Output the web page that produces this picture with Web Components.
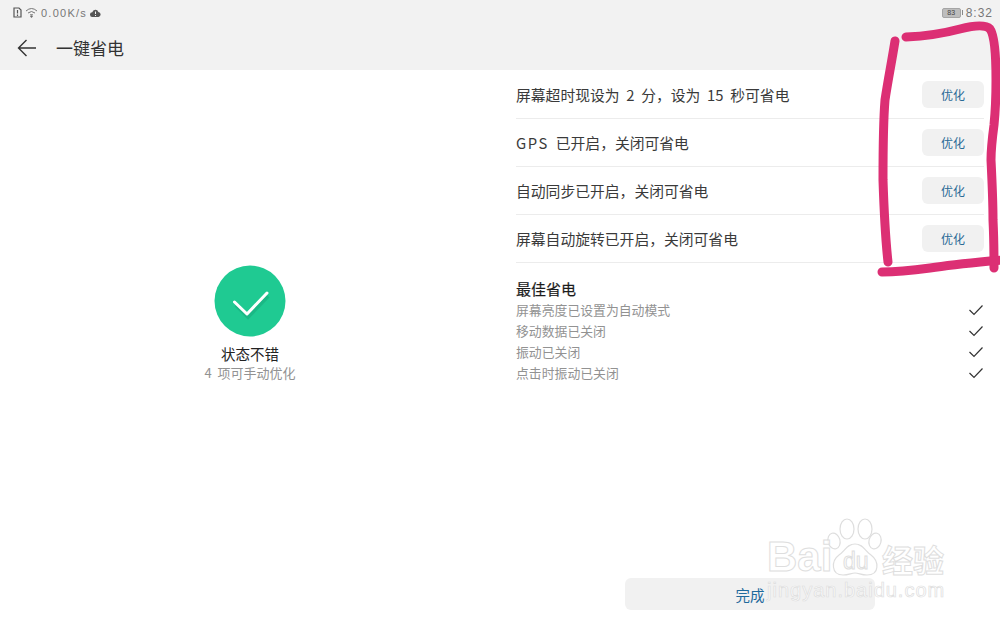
<!DOCTYPE html>
<html lang="zh">
<head>
<meta charset="utf-8">
<title>一键省电</title>
<style>
  html, body { margin: 0; height: 100%; background: #fff; }
  body { font-family: "Noto Sans CJK SC", "Liberation Sans", sans-serif; overflow: hidden; }
</style>
</head>
<body>
<saver-page>
  <saver-row action="优化">屏幕超时现设为 2 分&#xFF0C;设为 15 秒可省电</saver-row>
  <saver-row action="优化"><span style="letter-spacing:1.6px">GPS</span> 已开启&#xFF0C;关闭可省电</saver-row>
  <saver-row action="优化">自动同步已开启&#xFF0C;关闭可省电</saver-row>
  <saver-row action="优化">屏幕自动旋转已开启&#xFF0C;关闭可省电</saver-row>
  <saver-done>屏幕亮度已设置为自动模式</saver-done>
  <saver-done>移动数据已关闭</saver-done>
  <saver-done>振动已关闭</saver-done>
  <saver-done>点击时振动已关闭</saver-done>
</saver-page>

<script>
class SaverRow extends HTMLElement {
  constructor() {
    super();
    const shadow = this.attachShadow({ mode: 'open' });
    shadow.innerHTML = `
      <style>
        :host {
          display: flex;
          align-items: center;
          justify-content: space-between;
          height: 47px;
          border-bottom: 1px solid #ececec;
          font-size: 14.8px;
          color: #3a3a3a;
          white-space: pre;
          word-spacing: 3.4px;
        }
        button {
          width: 62px;
          height: 27px;
          border: 0;
          padding: 0;
          border-radius: 6px;
          background: #f1f1f1;
          color: #2a6a96;
          font: inherit;
          font-size: 12px;
        }
      </style>
      <span><slot></slot></span>
      <button>${this.getAttribute('action')}</button>
    `;
  }
}
customElements.define('saver-row', SaverRow);

class SaverDone extends HTMLElement {
  constructor() {
    super();
    const shadow = this.attachShadow({ mode: 'open' });
    shadow.innerHTML = `
      <style>
        :host {
          display: flex;
          align-items: center;
          justify-content: space-between;
          height: 21px;
          font-size: 12.85px;
          color: #929292;
        }
        svg { width: 16px; height: 12px; }
      </style>
      <span><slot></slot></span>
      <svg viewBox="0 0 16 12" fill="none" stroke="#333" stroke-width="1.2"><path d="M1.5 6 L6 10.5 L14.5 1.5"/></svg>
    `;
  }
}
customElements.define('saver-done', SaverDone);

class SaverStatusBar extends HTMLElement {
  constructor() {
    super();
    const shadow = this.attachShadow({ mode: 'open' });
    shadow.innerHTML = `
      <style>
        :host {
          display: flex;
          align-items: center;
          height: 25px;
          padding: 0 8px 0 13px;
          font-family: "Liberation Sans", sans-serif;
          font-size: 11px;
          color: #777;
          letter-spacing: 1.25px;
        }
        .left { display: flex; align-items: center; gap: 3px; flex: 1; }
        .right { display: flex; align-items: center; gap: 3px; }
        .time { font-size: 12px; letter-spacing: 1px; margin-right: -1px; }
        .batt {
          width: 17px; height: 8px; background: #bdbdbd; border: 1px solid #a5a5a5; border-radius: 2px;
          font-size: 7px; line-height: 8px; text-align: center; color: #444; letter-spacing: 0;
        }
        .nub { width: 1px; height: 5px; background: #888; margin-left: -2px; }
      </style>
      <div class="left">
        <svg width="9" height="11" viewBox="0 0 9 11" fill="none" stroke="#555" stroke-width="1.2"><path d="M1 1 H6 L8 3 V10 H1 Z"/><path d="M4.5 3 V6.5 M4.5 7.5 V9"/></svg>
        <svg width="13" height="11" viewBox="0 0 13 11" fill="none" stroke="#777" stroke-width="1"><path d="M1 4 Q6.5 -1 12 4 M3 6 Q6.5 3 10 6 M5 8 Q6.5 7 8 8"/><circle cx="6.5" cy="9.5" r=".8" fill="#666"/></svg>
        <span>0.00K/s</span>
        <svg width="11" height="8" viewBox="0 0 11 8"><path fill="#555" d="M2.5 8 A2.4 2.4 0 0 1 2.3 3.2 A3.2 3.2 0 0 1 8.4 2.9 A2.6 2.6 0 0 1 8.6 8 Z"/><path stroke="#f2f2f2" d="M5.5 2.5 V5 M5.5 6 V7"/></svg>
      </div>
      <div class="right">
        <span class="batt">83</span><span class="nub"></span>
        <span class="time">8:32</span>
      </div>
    `;
  }
}
customElements.define('saver-status-bar', SaverStatusBar);

class SaverHeader extends HTMLElement {
  constructor() {
    super();
    const shadow = this.attachShadow({ mode: 'open' });
    shadow.innerHTML = `
      <style>
        :host { display: block; height: 70px; background: #f2f2f2; }
        .bar { display: flex; align-items: center; height: 45px; padding-left: 17px; gap: 19px; }
        h1 { margin: 0; font-size: 17px; font-weight: 400; color: #333; }
        svg { display: block; }
      </style>
      <saver-status-bar></saver-status-bar>
      <div class="bar">
        <svg width="20" height="18" viewBox="0 0 20 18" fill="none" stroke="#333" stroke-width="1.4"><path d="M19 9 H2 M9.5 1 L1.5 9 L9.5 17"/></svg>
        <h1>一键省电</h1>
      </div>
    `;
  }
}
customElements.define('saver-header', SaverHeader);

class SaverStatus extends HTMLElement {
  constructor() {
    super();
    const shadow = this.attachShadow({ mode: 'open' });
    shadow.innerHTML = `
      <style>
        :host { display: flex; flex-direction: column; align-items: center; padding-top: 195px; }
        svg { display: block; margin-bottom: 7px; }
        .title { font-size: 14.5px; line-height: 20px; color: #222; }
        .sub { font-size: 13px; line-height: 18px; color: #929292; white-space: pre; }
      </style>
      <svg width="72" height="72" viewBox="0 0 72 72">
        <circle cx="36" cy="36" r="35.5" fill="#1fca92"/>
        <path d="M21 38 L33 50 L53 29" fill="none" stroke="#0f8f66" stroke-opacity=".3" stroke-width="4" transform="translate(1 2)"/>
        <path d="M20.5 37 L33 49 L53 28" fill="none" stroke="#fff" stroke-width="3" stroke-linecap="round" stroke-linejoin="round"/>
      </svg>
      <div class="title">状态不错</div>
      <div class="sub">4  项可手动优化</div>
    `;
  }
}
customElements.define('saver-status', SaverStatus);

class SaverPage extends HTMLElement {
  constructor() {
    super();
    const shadow = this.attachShadow({ mode: 'open' });
    shadow.innerHTML = `
      <style>
        :host { display: block; position: relative; width: 1000px; height: 625px; overflow: hidden; }
        .main { display: grid; grid-template-columns: 500px 1fr; }
        .list { padding: 1px 16px 0; }
        h2 { margin: 16px 0 0; font-size: 15px; line-height: 20px; font-weight: 400; color: #1c1c1c; -webkit-text-stroke: .2px #1c1c1c; }
        .finish {
          position: absolute; left: 625px; top: 578px; width: 250px; height: 32px;
          display: flex; align-items: center; justify-content: center;
          border: 0; padding: 0; font-family: inherit;
          border-radius: 6px; background: #f1f1f1; color: #1f6a9c; font-size: 14.5px;
        }
        .ink { position: absolute; left: 0; top: 0; pointer-events: none; }
        .mark { position: absolute; color: rgba(255,255,255,.75); font-family: "Liberation Sans", sans-serif; -webkit-text-stroke: 1px #dedede; white-space: nowrap; }
        .bai { left: 767px; top: 533px; font-size: 42px; line-height: 48px; font-weight: 700; }
        .du { left: 843px; top: 547px; font-size: 23px; line-height: 28px; }
        .jing { left: 767px; top: 576px; font-size: 20px; line-height: 28px; letter-spacing: 1px; -webkit-text-stroke: .7px #dedede; }
        .cn { left: 882px; top: 541px; font-family: "Noto Sans CJK SC", sans-serif; font-size: 31px; line-height: 36px; font-weight: 700; }
        .paw { position: absolute; left: 825px; top: 515px; color: transparent; }
      </style>
      <saver-header></saver-header>
      <div class="main">
        <saver-status></saver-status>
        <div class="list">
          <slot name="rows"></slot>
          <h2>最佳省电</h2>
          <slot name="done"></slot>
        </div>
      </div>
      <button class="finish">完成</button>
      <svg class="paw" width="60" height="65" viewBox="0 0 60 65" fill="none" stroke="#dedede" stroke-width="1.2">
        <ellipse cx="22" cy="14" rx="7" ry="10"/><ellipse cx="40" cy="14" rx="7" ry="10"/>
        <ellipse cx="9" cy="26" rx="6" ry="8" transform="rotate(-15 9 26)"/><ellipse cx="50" cy="26" rx="6" ry="8" transform="rotate(15 50 26)"/>
        <path d="M30 29 C38 29 40 36 46 40 C54 46 55 60 42 60 C36 60 34 58 30 58 C26 58 24 60 18 60 C6 60 6 46 14 40 C20 36 22 29 30 29 Z"/>
      </svg>
      <span class="mark bai">Bai</span>
      <span class="mark du">du</span>
      <span class="mark cn">经验</span>
      <span class="mark jing">jingyan.baidu.com</span>
      <svg class="ink" width="1000" height="625" viewBox="0 0 1000 625" fill="none" stroke="#dc2f74" stroke-width="9" stroke-linecap="round" stroke-linejoin="round">
        <path d="M895 41 C892 60 888 80 885 100 C883 125 883 150 883 180 C884 210 885 235 888 262"/>
        <path d="M906 37 C930 36 945 33 960 29 C972 26 985 24 990 29 C995 36 996 60 996 80 C996 100 995 115 994 125 C992 140 991 150 991 160 C992 180 993 200 993 220 C994 240 994 255 994 268"/>
        <path d="M882 272 C900 272 915 270 930 268 C950 265 970 263 990 261 L1002 260"/>
      </svg>
    `;
  }
  connectedCallback() {
    for (const el of this.children) {
      el.slot = el.localName === 'saver-row' ? 'rows' : 'done';
    }
  }
}
customElements.define('saver-page', SaverPage);
</script>
</body>
</html>
